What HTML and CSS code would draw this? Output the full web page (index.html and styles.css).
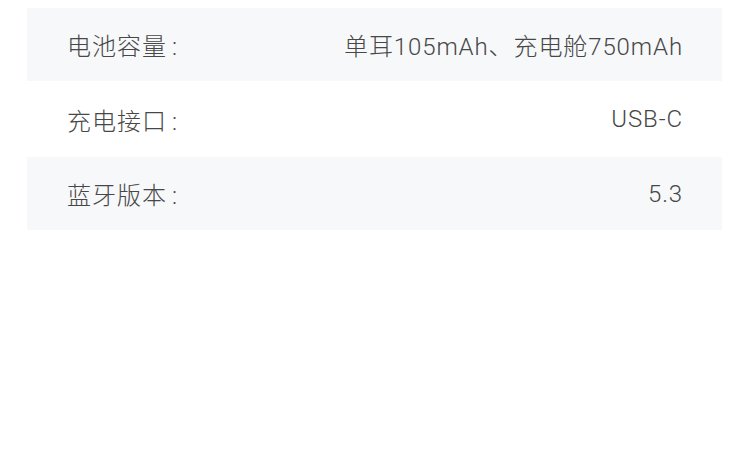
FILE: index.html
```html
<!DOCTYPE html>
<html lang="zh-CN">
<head>
    <meta charset="UTF-8">
    <meta name="viewport" content="width=device-width, initial-scale=1.0">
    <title>产品参数</title>
    <link rel="stylesheet" href="styles.css">
</head>
<body>
    <div class="spec-list">
        <div class="spec-row">
            <span class="spec-label">电池容量<span class="colon">:</span></span>
            <span class="spec-value">单耳105mAh、充电舱750mAh</span>
        </div>
        <div class="spec-row">
            <span class="spec-label">充电接口<span class="colon">:</span></span>
            <span class="spec-value">USB-C</span>
        </div>
        <div class="spec-row">
            <span class="spec-label">蓝牙版本<span class="colon">:</span></span>
            <span class="spec-value">5.3</span>
        </div>
    </div>
</body>
</html>
```

FILE: styles.css
```css
body {
    margin: 0;
    padding: 8px 28px 0 27px;
    background: #fff;
    font-family: Roboto, "Noto Sans CJK SC", sans-serif;
    font-weight: 300;
    color: #474747;
}
.spec-list {
    display: flex;
    flex-direction: column;
}
.spec-row {
    display: flex;
    justify-content: space-between;
    align-items: center;
    height: 73px;
    padding: 0 39px 0 40px;
    font-size: 24px;
}
.spec-row:nth-child(odd) {
    background-color: #f7f8fa;
}
.spec-row:nth-child(2) {
    height: 76px;
}
.spec-label {
    letter-spacing: 1px;
}
.colon {
    margin-left: 5px;
}
.spec-value {
    letter-spacing: 0.9px;
}
```
